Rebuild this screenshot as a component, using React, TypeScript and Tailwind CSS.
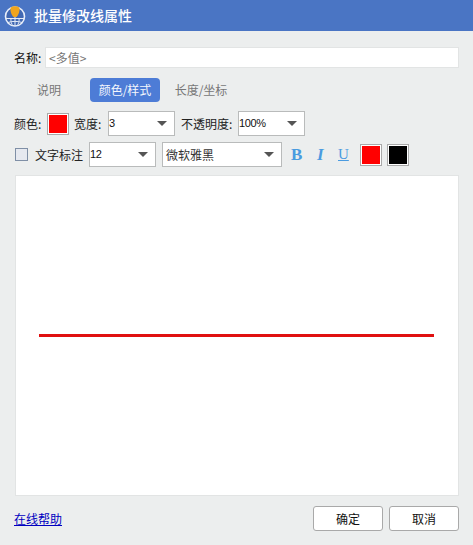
const cjk = 'font-["Noto_Sans_CJK_SC","Liberation_Sans",sans-serif]';

function Select({ value, width, latin }: { value: string; width: string; latin?: boolean }) {
  return (
    <div className={`${width} h-[25px] shrink-0 flex items-center justify-between bg-white border border-[#b9bbbb] pr-[7px] ${latin ? 'pl-0' : 'pl-[3px]'}`}>
      <span className={latin ? 'text-[11px] tracking-[-0.4px] text-[#111] font-["Liberation_Sans",sans-serif]' : 'text-[12px] text-[#333]'}>{value}</span>
      <span className="w-0 h-0 border-x-[5px] border-x-transparent border-t-[5px] border-t-[#555]" />
    </div>
  );
}

function Swatch({ color }: { color: string }) {
  return (
    <div className="w-[22px] h-[22px] shrink-0 border border-[#a9a9a9] bg-white p-[1px]">
      <div className="w-full h-full" style={{ backgroundColor: color }} />
    </div>
  );
}

function AppIcon() {
  return (
    <svg width="22" height="22" viewBox="0 0 22 22" className="shrink-0">
      <circle cx="11" cy="11.500" r="9.500" fill="#4168b2" stroke="#e8eef9" strokeWidth="1.600" />
      <path d="M2 13.500h18M11 12v9M4 17.500c4-1.500 10-1.500 14 0M7 13c-.5 3 .5 6 2 8M15 13c.5 3-.5 6-2 8" fill="none" stroke="#e4ebf7" strokeWidth="1" />
      <path d="M6.500 3c1-2.500 8-2.500 9 0 .5 3.500-1 7-3 9h-3c-2-2-3.500-5.500-3-9z" fill="#f0a51e" />
    </svg>
  );
}

const tabs = [
  { label: '说明', className: 'w-[70px] mr-[6px] text-[#777]' },
  { label: '颜色/样式', className: 'w-[70px] rounded-[4px] bg-[#4d7cd6] text-[#f4f7fd]' },
  { label: '长度/坐标', className: 'w-[82px] text-[#777]' },
];

export default function App() {
  return (
    <div className={`w-[473px] h-[545px] flex flex-col bg-[#eceeee] overflow-hidden ${cjk}`}>
      <div className="h-[31px] shrink-0 flex items-center gap-[8px] pl-[4px] bg-[#4a75c4]">
        <AppIcon />
        <span className="text-[14px] font-medium text-white">批量修改线属性</span>
      </div>

      <div className="flex-1 flex flex-col px-[14px]">
        <div className="mt-[16px] h-[21px] flex items-center">
          <span className="w-[31px] shrink-0 text-[12px] leading-none text-[#111] whitespace-nowrap">名称:</span>
          <div className="flex-1 h-[21px] flex items-center bg-white border border-[#e2e4e4] pl-[3px] text-[12px] text-[#777]">
            &lt;多值&gt;
          </div>
        </div>

        <div className="mt-[10px] h-[24px] flex items-center text-[12px]">
          {tabs.map((tab) => (
            <div key={tab.label} className={`h-[24px] flex items-center justify-center whitespace-nowrap ${tab.className}`}>
              {tab.label}
            </div>
          ))}
        </div>

        <div className="mt-[9px] h-[25px] flex items-center text-[12px] leading-none text-[#222] whitespace-nowrap">
          <span className="w-[33px] shrink-0">颜色:</span>
          <Swatch color="#ff0000" />
          <span className="w-[34px] ml-[5px] shrink-0">宽度:</span>
          <Select value="3" width="w-[67px]" latin />
          <span className="w-[57px] ml-[6px] shrink-0">不透明度:</span>
          <Select value="100%" width="w-[67px]" latin />
        </div>

        <div className="mt-[6px] h-[25px] flex items-center text-[12px] leading-none text-[#222] whitespace-nowrap">
          <div className="ml-[1px] w-[13px] h-[13px] shrink-0 border border-[#7f8fa6] bg-[#e6e9f0]" />
          <span className="w-[48px] ml-[7px] shrink-0">文字标注</span>
          <div className="ml-[6px]">
            <Select value="12" width="w-[67px]" latin />
          </div>
          <div className="ml-[6px]">
            <Select value="微软雅黑" width="w-[120px]" />
          </div>
          <div className="w-[78px] shrink-0 flex items-center text-[17px] text-[#4a9be0] font-['Liberation_Serif',serif]">
            <span className="w-[26px] pl-[9px] font-bold">B</span>
            <span className="w-[24px] pl-[9px] italic font-bold">I</span>
            <span className="w-[28px] pl-[6px] underline text-[15px]">U</span>
          </div>
          <Swatch color="#ff0000" />
          <div className="ml-[5px]">
            <Swatch color="#000000" />
          </div>
        </div>

        <div className="mt-[8px] ml-[1px] h-[321px] flex items-center pl-[23px] pr-[24px] bg-white border border-[#e2e4e4]">
          <div className="w-full h-[3px] bg-[#e01010]" />
        </div>

        <div className="mt-[10px] h-[25px] flex items-center justify-between">
          <span className="text-[12px] underline text-[#0000c0]">在线帮助</span>
          <div className="flex gap-[6px]">
            <button className="w-[70px] h-[25px] bg-white border border-[#a9a9a9] rounded-[3px] text-[12px] text-[#111]">确定</button>
            <button className="w-[70px] h-[25px] bg-white border border-[#a9a9a9] rounded-[3px] text-[12px] text-[#111]">取消</button>
          </div>
        </div>
      </div>
    </div>
  );
}
